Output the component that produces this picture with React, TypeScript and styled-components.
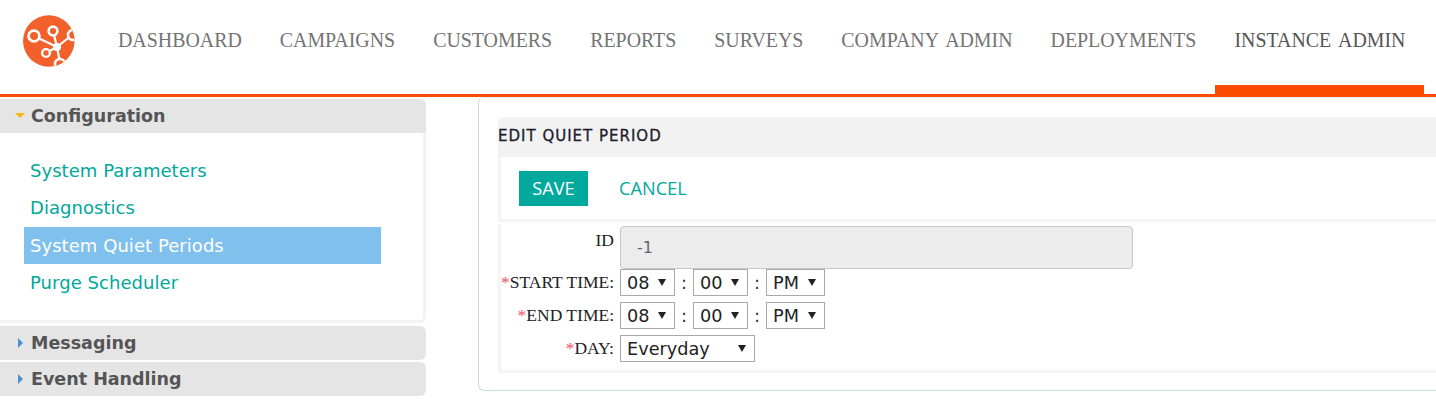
import React from 'react';
import styled, { createGlobalStyle } from 'styled-components';

const GlobalStyle = createGlobalStyle`
  html, body {
    margin: 0;
    padding: 0;
    background: #fff;
    overflow: hidden;
  }
`;

const Page = styled.div`
  width: 1436px;
  height: 412px;
  overflow: hidden;
`;

const Header = styled.header`
  display: flex;
  align-items: flex-start;
  height: 94px;
  border-bottom: 3px solid #f94c00;
  box-sizing: content-box;
  padding-left: 23px;
`;

const Logo = styled.svg`
  display: block;
  margin-top: 15px;
  margin-right: 24px;
  flex: none;
`;

const Nav = styled.nav`
  display: flex;
`;

const NavItem = styled.a<{ $active?: boolean }>`
  position: relative;
  display: block;
  padding: 0 19px;
  height: 94px;
  line-height: 81px;
  font-family: 'Liberation Serif', serif;
  font-size: 19.9px;
  word-spacing: 3px;
  color: ${(p) => (p.$active ? '#555' : '#737373')};
  white-space: nowrap;

  ${(p) => p.$active && `
    &::after {
      content: '';
      position: absolute;
      left: 0;
      right: 0;
      bottom: -3px;
      height: 12px;
      background: #f94c00;
    }
  `}
`;

const Body = styled.div`
  display: flex;
  align-items: flex-start;
`;

const Sidebar = styled.aside`
  width: 426px;
  flex: none;
  padding-top: 2px;
  font-family: 'DejaVu Sans', sans-serif;
`;

const AccordionHead = styled.div<{ $open?: boolean }>`
  display: flex;
  align-items: center;
  box-sizing: border-box;
  height: 34px;
  margin-bottom: 2px;
  padding-left: ${(p) => (p.$open ? 15 : 18)}px;
  padding-bottom: 1px;
  background: #e5e5e5;
  border-radius: ${(p) => (p.$open ? '0 6px 0 0' : '0 6px 6px 0')};
  font-size: 17.5px;
  font-weight: 700;
  color: #555;
`;

const OpenCaret = styled.span`
  width: 0;
  height: 0;
  margin-right: 6px;
  border-left: 5px solid transparent;
  border-right: 5px solid transparent;
  border-top: 5px solid #fdb813;
`;

const ClosedCaret = styled.span`
  width: 0;
  height: 0;
  margin-right: 8px;
  border-top: 5px solid transparent;
  border-bottom: 5px solid transparent;
  border-left: 5px solid #4a90d9;
`;

const AccordionBody = styled.div`
  box-sizing: border-box;
  height: 190px;
  margin-top: -2px;
  margin-bottom: 3px;
  padding-top: 19px;
  border-right: 3px solid #f3f3f3;
  border-bottom: 3px solid #f3f3f3;
  border-radius: 0 0 6px 0;
`;

const MenuItem = styled.a<{ $active?: boolean }>`
  display: block;
  box-sizing: border-box;
  width: 357px;
  height: 37.4px;
  margin-left: 24px;
  padding-left: 6px;
  line-height: 37px;
  font-size: 18px;
  letter-spacing: 0.05px;
  color: ${(p) => (p.$active ? '#fff' : '#00a89c')};
  background: ${(p) => (p.$active ? '#80c0ec' : 'transparent')};
`;

const Main = styled.main`
  box-sizing: border-box;
  width: 1000px;
  height: 294px;
  margin-left: 52px;
  padding: 19px 0 0 19px;
  border-left: 1px solid #c5dbec;
  border-bottom: 1px solid #c5dbec;
  border-top: 1px solid #e4eef6;
  border-radius: 6px 0 0 6px;
  font-family: 'DejaVu Sans', sans-serif;
`;

const TitleBar = styled.div`
  height: 40px;
  line-height: 38px;
  background: #f2f2f2;
  border-radius: 6px 0 0 0;
  font-size: 15px;
  font-weight: 400;
  letter-spacing: 1px;
  color: #1c1c2a;
  -webkit-text-stroke: 0.3px #1c1c2a;
`;

const Toolbar = styled.div`
  display: flex;
  align-items: center;
  box-sizing: border-box;
  height: 65px;
  padding-left: 18px;
  border: 3px solid #f5f5f5;
  border-top: 0;
  border-right: 0;
  font-family: 'Open Sans', sans-serif;
  font-size: 18.2px;
`;

const SaveButton = styled.button`
  width: 69px;
  height: 35px;
  border: 0;
  padding: 0;
  margin-right: 31px;
  background: #00a99d;
  color: #fff;
  font: inherit;
`;

const CancelLink = styled.a`
  color: #00a99d;
`;

const Form = styled.form`
  display: grid;
  grid-template-columns: 113px 1fr;
  column-gap: 6px;
  align-content: start;
  box-sizing: border-box;
  height: 149px;
  margin-top: 2px;
  padding-top: 2px;
  border: 3px solid #f5f5f5;
  border-top: 0;
  border-right: 0;
`;

const Label = styled.label<{ $top?: boolean }>`
  font-family: 'Liberation Serif', serif;
  font-size: 17.5px;
  line-height: ${(p) => (p.$top ? 29 : 27)}px;
  text-align: right;
  white-space: nowrap;
  color: #222;
  align-self: ${(p) => (p.$top ? 'start' : 'center')};
  margin-bottom: ${(p) => (p.$top ? 0 : 6)}px;
`;

const Required = styled.span`
  color: #f0506e;
`;

const ReadOnlyInput = styled.div`
  box-sizing: border-box;
  width: 513px;
  height: 43px;
  padding-left: 16px;
  line-height: 41px;
  background: #ececec;
  border: 1px solid #c8c8c8;
  border-radius: 4px;
  font-size: 16px;
  color: #666;
`;

const Fields = styled.div`
  display: flex;
  align-items: center;
  height: 27px;
  margin-bottom: 6px;
`;

const SelectBox = styled.div<{ $width: number }>`
  position: relative;
  box-sizing: border-box;
  width: ${(p) => p.$width}px;
  height: 27px;
  padding-left: 6px;
  line-height: 26px;
  background: #fff;
  border: 1px solid #a9a9a9;
  font-size: 17.7px;
  color: #222;

  &::after {
    content: '';
    position: absolute;
    right: 8px;
    top: 9px;
    border-left: 4px solid transparent;
    border-right: 4px solid transparent;
    border-top: 7px solid #222;
  }
`;

const Colon = styled.span`
  width: 18px;
  text-align: center;
  font-size: 18px;
  color: #333;
`;

const timeFields = (
  <Fields>
    <SelectBox $width={55}>08</SelectBox>
    <Colon>:</Colon>
    <SelectBox $width={55}>00</SelectBox>
    <Colon>:</Colon>
    <SelectBox $width={59}>PM</SelectBox>
  </Fields>
);

export default function App() {
  return (
    <Page>
      <GlobalStyle />
      <Header>
        <Logo width="52" height="52" viewBox="0 0 52 52">
          <defs>
            <clipPath id="logo-clip"><circle cx="25.8" cy="26" r="25.8" /></clipPath>
          </defs>
          <circle cx="25.8" cy="26" r="25.8" fill="#f2602b" />
          <g clipPath="url(#logo-clip)" fill="none" stroke="#fff" strokeWidth="2.2">
            <path d="M11 21 L34 32 M34 32 L49 20 M34 32 L23 38 M34 32 L37 48 M30 16 L34 32" />
            <circle cx="11" cy="21" r="5.4" fill="#f2602b" strokeWidth="2.8" />
            <circle cx="30" cy="16" r="4.4" fill="#f2602b" strokeWidth="2.6" />
            <circle cx="23" cy="38" r="3.9" fill="#f2602b" strokeWidth="2.4" />
            <circle cx="50" cy="20" r="5" fill="#f2602b" strokeWidth="2.6" />
            <circle cx="37" cy="49" r="5" fill="#f2602b" strokeWidth="2.6" />
            <circle cx="34" cy="32" r="4" fill="#fff" stroke="none" />
          </g>
        </Logo>
        <Nav>
          <NavItem>DASHBOARD</NavItem>
          <NavItem>CAMPAIGNS</NavItem>
          <NavItem>CUSTOMERS</NavItem>
          <NavItem>REPORTS</NavItem>
          <NavItem>SURVEYS</NavItem>
          <NavItem>COMPANY ADMIN</NavItem>
          <NavItem>DEPLOYMENTS</NavItem>
          <NavItem $active>INSTANCE ADMIN</NavItem>
        </Nav>
      </Header>
      <Body>
        <Sidebar>
          <AccordionHead $open><OpenCaret />Configuration</AccordionHead>
          <AccordionBody>
            <MenuItem>System Parameters</MenuItem>
            <MenuItem>Diagnostics</MenuItem>
            <MenuItem $active>System Quiet Periods</MenuItem>
            <MenuItem>Purge Scheduler</MenuItem>
          </AccordionBody>
          <AccordionHead><ClosedCaret />Messaging</AccordionHead>
          <AccordionHead><ClosedCaret />Event Handling</AccordionHead>
        </Sidebar>
        <Main>
          <TitleBar>EDIT QUIET PERIOD</TitleBar>
          <Toolbar>
            <SaveButton type="button">SAVE</SaveButton>
            <CancelLink>CANCEL</CancelLink>
          </Toolbar>
          <Form>
            <Label $top>ID</Label>
            <ReadOnlyInput>-1</ReadOnlyInput>
            <Label><Required>*</Required>START TIME:</Label>
            {timeFields}
            <Label><Required>*</Required>END TIME:</Label>
            {timeFields}
            <Label><Required>*</Required>DAY:</Label>
            <Fields><SelectBox $width={135}>Everyday</SelectBox></Fields>
          </Form>
        </Main>
      </Body>
    </Page>
  );
}
